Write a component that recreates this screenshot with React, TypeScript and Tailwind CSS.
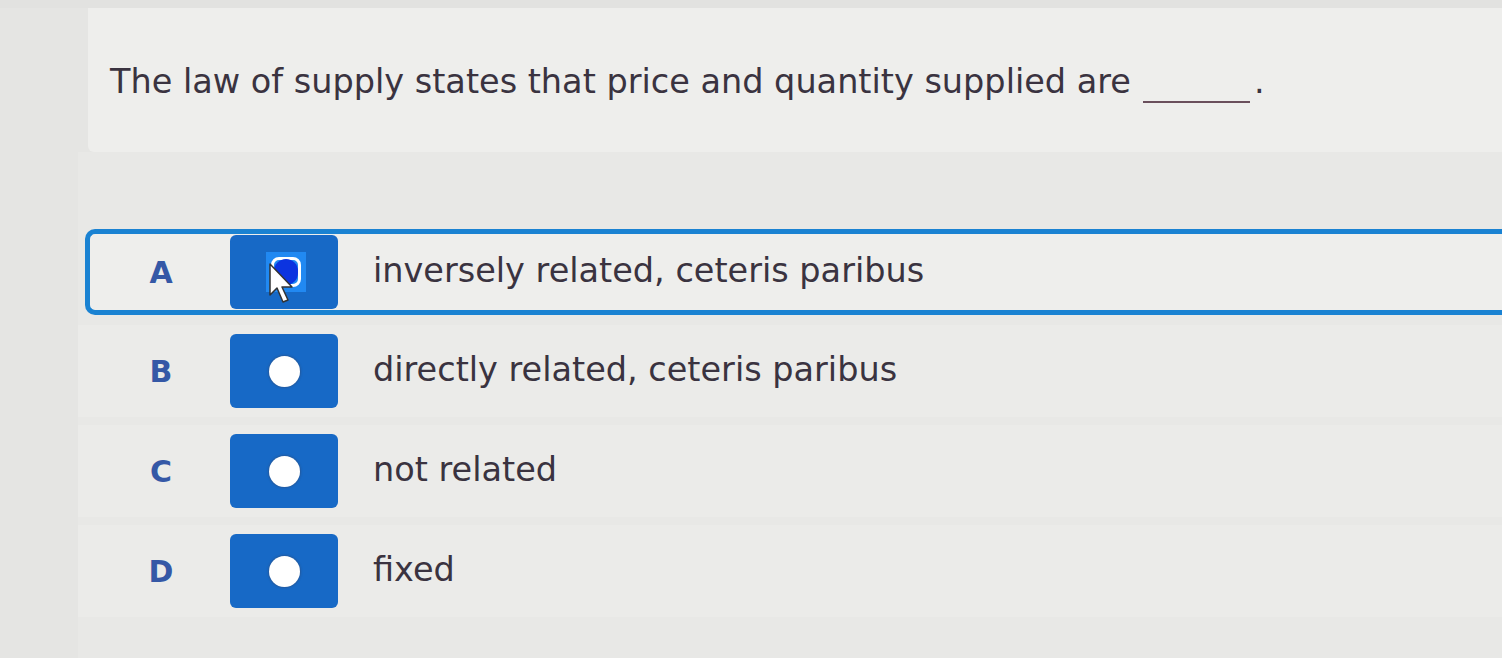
import React from "react";

const font = { fontFamily: '"DejaVu Sans", Verdana, sans-serif' };

function Radio() {
  return <div className="w-[31px] h-[31px] rounded-full bg-white shadow-[0_0_2px_1px_rgba(60,60,80,0.35)]" />;
}

function Row({
  letter,
  text,
  selected,
}: {
  letter: string;
  text: string;
  selected?: boolean;
}) {
  return (
    <div
      className={
        selected
          ? "flex items-center h-[86px] ml-[85px] border-[5px] border-r-0 border-[#1a82d2] rounded-l-[10px] bg-[#eeeeec] pl-[60px]"
          : "flex items-center h-[92px] ml-[78px] bg-[#ebebe9] pl-[72px]"
      }
    >
      <div className="w-[22px] flex justify-center text-[30px] font-bold text-[#3558a6]">
        {letter}
      </div>
      <div className="ml-[58px] w-[108px] h-[74px] rounded-[6px] bg-[#1769c6] flex items-center justify-center relative">
        {selected ? (
          <div className="relative ml-[4px] w-[40px] h-[40px] bg-[#2189f2] flex items-center justify-center">
            <div className="w-[30px] h-[30px] rounded-[8px] border-[3px] border-white bg-[#2189f2] flex items-center justify-center">
              <div className="w-[26px] h-[26px] rounded-full bg-[#0c34e0]" />
            </div>
            <svg className="absolute left-[2px] top-[10px]" width="30" height="44" viewBox="0 0 30 44">
              <path d="M2 2 L2 33 L9 26 L15 40 L20 38 L14 25 L24 25 Z" fill="white" stroke="#333" strokeWidth="1.5" strokeLinejoin="round" />
            </svg>
          </div>
        ) : (
          <Radio />
        )}
      </div>
      <div className="ml-[35px] text-[33.5px] text-[#3a3340] leading-none pb-[2px]">{text}</div>
    </div>
  );
}

export default function App() {
  return (
    <div className="w-[1502px] h-[658px] bg-[#e5e5e3] overflow-hidden flex flex-col" style={font}>
      <div className="h-[8px] bg-[#e2e2e0]" />
      <div className="ml-[88px] h-[144px] bg-[#eeeeec] rounded-bl-[6px] pl-[22px] pt-[57px]">
        <div className="text-[33.5px] text-[#3a3340] flex items-end leading-none">
          <span>The law of supply states that price and quantity supplied are</span>
          <span className="ml-[12px] mb-[-4px] w-[107px] h-[2px] bg-[#6a4f5c]" />
          <span className="ml-[4px]">.</span>
        </div>
      </div>
      <div className="flex-1 flex flex-col bg-[#e8e8e6] ml-[78px] pt-[77px]">
        <div className="-ml-[78px]">
          <Row letter="A" text="inversely related, ceteris paribus" selected />
          <div className="h-[10px]" />
          <Row letter="B" text="directly related, ceteris paribus" />
          <div className="h-[8px]" />
          <Row letter="C" text="not related" />
          <div className="h-[8px]" />
          <Row letter="D" text="fixed" />
        </div>
      </div>
    </div>
  );
}
